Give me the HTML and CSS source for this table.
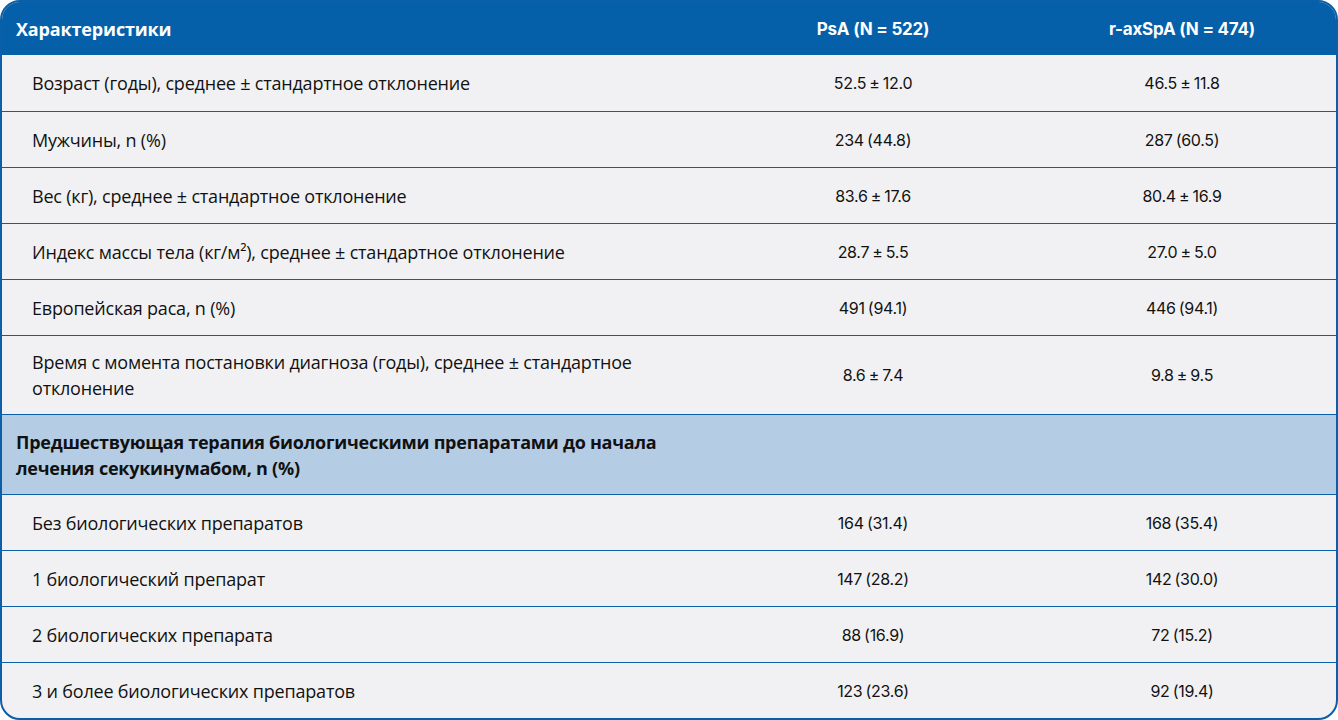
FILE: index.html
```html
<!DOCTYPE html>
<html lang="ru">
<head>
<meta charset="utf-8">
<title>Характеристики</title>
<link rel="stylesheet" href="styles.css">
</head>
<body>
<div class="card">
  <table class="data">
    <colgroup><col class="c1"><col class="c2"><col class="c3"></colgroup>
    <thead>
      <tr><th class="lbl">Характеристики</th><th>PsA (N = 522)</th><th>r-axSpA (N = 474)</th></tr>
    </thead>
    <tbody>
      <tr><td class="lbl">Возраст (годы), среднее ± стандартное отклонение</td><td>52.5 ± 12.0</td><td>46.5 ± 11.8</td></tr>
      <tr><td class="lbl">Мужчины, n (%)</td><td>234 (44.8)</td><td>287 (60.5)</td></tr>
      <tr><td class="lbl">Вес (кг), среднее ± стандартное отклонение</td><td>83.6 ± 17.6</td><td>80.4 ± 16.9</td></tr>
      <tr><td class="lbl">Индекс массы тела (кг/м²), среднее ± стандартное отклонение</td><td>28.7 ± 5.5</td><td>27.0 ± 5.0</td></tr>
      <tr><td class="lbl">Европейская раса, n (%)</td><td>491 (94.1)</td><td>446 (94.1)</td></tr>
      <tr class="tall"><td class="lbl">Время с момента постановки диагноза (годы), среднее ± стандартное отклонение</td><td>8.6 ± 7.4</td><td>9.8 ± 9.5</td></tr>
      <tr class="section"><td class="lbl">Предшествующая терапия биологическими препаратами до начала лечения секукинумабом, n (%)</td><td></td><td></td></tr>
      <tr><td class="lbl">Без биологических препаратов</td><td>164 (31.4)</td><td>168 (35.4)</td></tr>
      <tr><td class="lbl">1 биологический препарат</td><td>147 (28.2)</td><td>142 (30.0)</td></tr>
      <tr><td class="lbl">2 биологических препарата</td><td>88 (16.9)</td><td>72 (15.2)</td></tr>
      <tr><td class="lbl">3 и более биологических препаратов</td><td>123 (23.6)</td><td>92 (19.4)</td></tr>
    </tbody>
  </table>
</div>
</body>
</html>
```
FILE: styles.css
```css
html, body {
  margin: 0;
  padding: 0;
  background: #ffffff;
}
.card {
  width: 1338px;
  height: 720px;
  box-sizing: border-box;
  border: 2px solid #0a5fa8;
  border-radius: 20px;
  overflow: hidden;
  background: #f1f1f3;
}
.data {
  width: 100%;
  border-collapse: collapse;
  table-layout: fixed;
}
.c1 { width: 716px; }
.c2 { width: 310px; }
.c3 { width: auto; }
.data th {
  background: #0560a9;
  color: #ffffff;
  height: 53px;
  padding: 0;
  font-family: Inter, "Liberation Sans", sans-serif;
  font-weight: 700;
  font-size: 17px;
  letter-spacing: -0.2px;
  text-align: center;
  vertical-align: middle;
}
.data th.lbl {
  font-family: "Open Sans", sans-serif;
  font-size: 18px;
  letter-spacing: -0.15px;
  text-align: left;
  padding-left: 14px;
}
.data td {
  height: 55px;
  padding: 0;
  border-top: 1px solid #0a5fa8;
  font-family: Inter, "Liberation Sans", sans-serif;
  font-size: 16px;
  letter-spacing: -0.3px;
  word-spacing: -1px;
  color: #111111;
  text-align: center;
  vertical-align: middle;
}
.data tbody tr:first-child td { border-top: 0; height: 56px; }
.data td.lbl {
  font-family: "Open Sans", sans-serif;
  font-size: 18px;
  letter-spacing: -0.2px;
  word-spacing: 0;
  line-height: 26px;
  text-align: left;
  padding: 0 50px 0 30px;
}
.data tr.tall td { height: 78px; }
.data tr.section td {
  background: #b4cde4;
  height: 79px;
  border-bottom: 1px solid #0a5fa8;
}
.data tr.section td.lbl {
  font-weight: 700;
  letter-spacing: -0.25px;
  padding-left: 14px;
  padding-right: 30px;
}
```
